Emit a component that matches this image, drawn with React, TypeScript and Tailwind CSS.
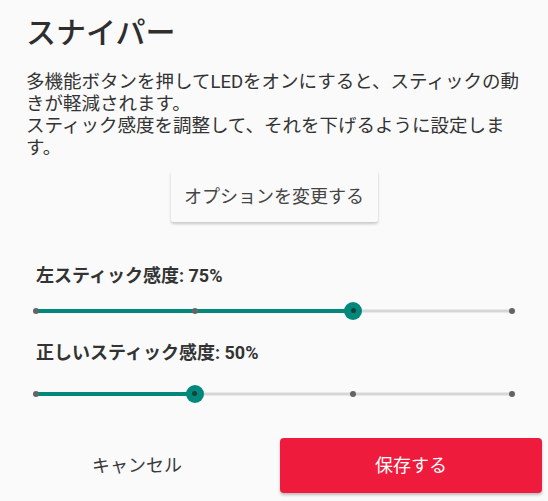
import React from "react";

const MIN = 25;
const MAX = 100;
const TICKS = [25, 50, 75, 100];

function Slider({ value }: { value: number }) {
  const pct = ((value - MIN) / (MAX - MIN)) * 100;
  return (
    <div className="relative h-[20px] w-full">
      <div className="absolute left-0 right-0 top-1/2 h-[3px] -translate-y-1/2 bg-[#d6d6d6]" />
      <div
        className="absolute left-0 top-1/2 h-[4px] -translate-y-1/2 bg-[#00897b]"
        style={{ width: `${pct}%` }}
      />
      {TICKS.map((t) => (
        <div
          key={t}
          className="absolute top-1/2 h-[6px] w-[6px] -translate-x-1/2 -translate-y-1/2 rounded-full bg-[#5f6663]"
          style={{ left: `${((t - MIN) / (MAX - MIN)) * 100}%` }}
        />
      ))}
      <div
        className="absolute top-1/2 flex h-[18px] w-[18px] -translate-x-1/2 -translate-y-1/2 items-center justify-center rounded-full bg-[#00897b]"
        style={{ left: `${pct}%` }}
      >
        <div className="h-[5px] w-[5px] rounded-full bg-[#16403b]" />
      </div>
    </div>
  );
}

export default function App() {
  const left = 75;
  const right = 50;

  return (
    <div
      className="flex h-[501px] w-[548px] flex-col bg-[#fafafa] text-[#333]"
      style={{ fontFamily: 'Roboto, "Noto Sans CJK JP", sans-serif' }}
    >
      <div className="px-[26px] pt-[15px]">
        <h1 className="text-[30px] font-medium leading-[36px] text-[#2e2e2e]">スナイパー</h1>
        <p className="mt-[20px] text-[18.5px] leading-[22px] text-[#333]">
          多機能ボタンを押してLEDをオンにすると、スティックの動きが軽減されます。
          <br />
          スティック感度を調整して、それを下げるように設定します。
        </p>
      </div>

      <div className="mt-[11px] flex justify-center">
        <button className="h-[52px] w-[207px] rounded-[3px] bg-[#fafafa] text-[18px] text-[#444] shadow-[0_2px_3px_rgba(0,0,0,0.2)]">
          オプションを変更する
        </button>
      </div>

      <div className="mt-[42px] px-[36px]">
        <div className="text-[18px] font-bold leading-[24px] text-[#333]">左スティック感度: {left}%</div>
        <div className="mt-[12.7px]">
          <Slider value={left} />
        </div>
        <div className="mt-[20.3px] text-[18px] font-bold leading-[24px] text-[#333]">
          正しいスティック感度: {right}%
        </div>
        <div className="mt-[18.7px]">
          <Slider value={right} />
        </div>
      </div>

      <div className="mt-[34.3px] flex gap-[12px] px-[6px]">
        <button className="h-[55px] flex-1 rounded-[4px] text-[18px] text-[#3a3a3a]">キャンセル</button>
        <button className="h-[55px] flex-1 rounded-[4px] bg-[#ee1b3c] text-[18px] text-white shadow-[0_2px_3px_rgba(0,0,0,0.25)]">
          保存する
        </button>
      </div>
    </div>
  );
}
